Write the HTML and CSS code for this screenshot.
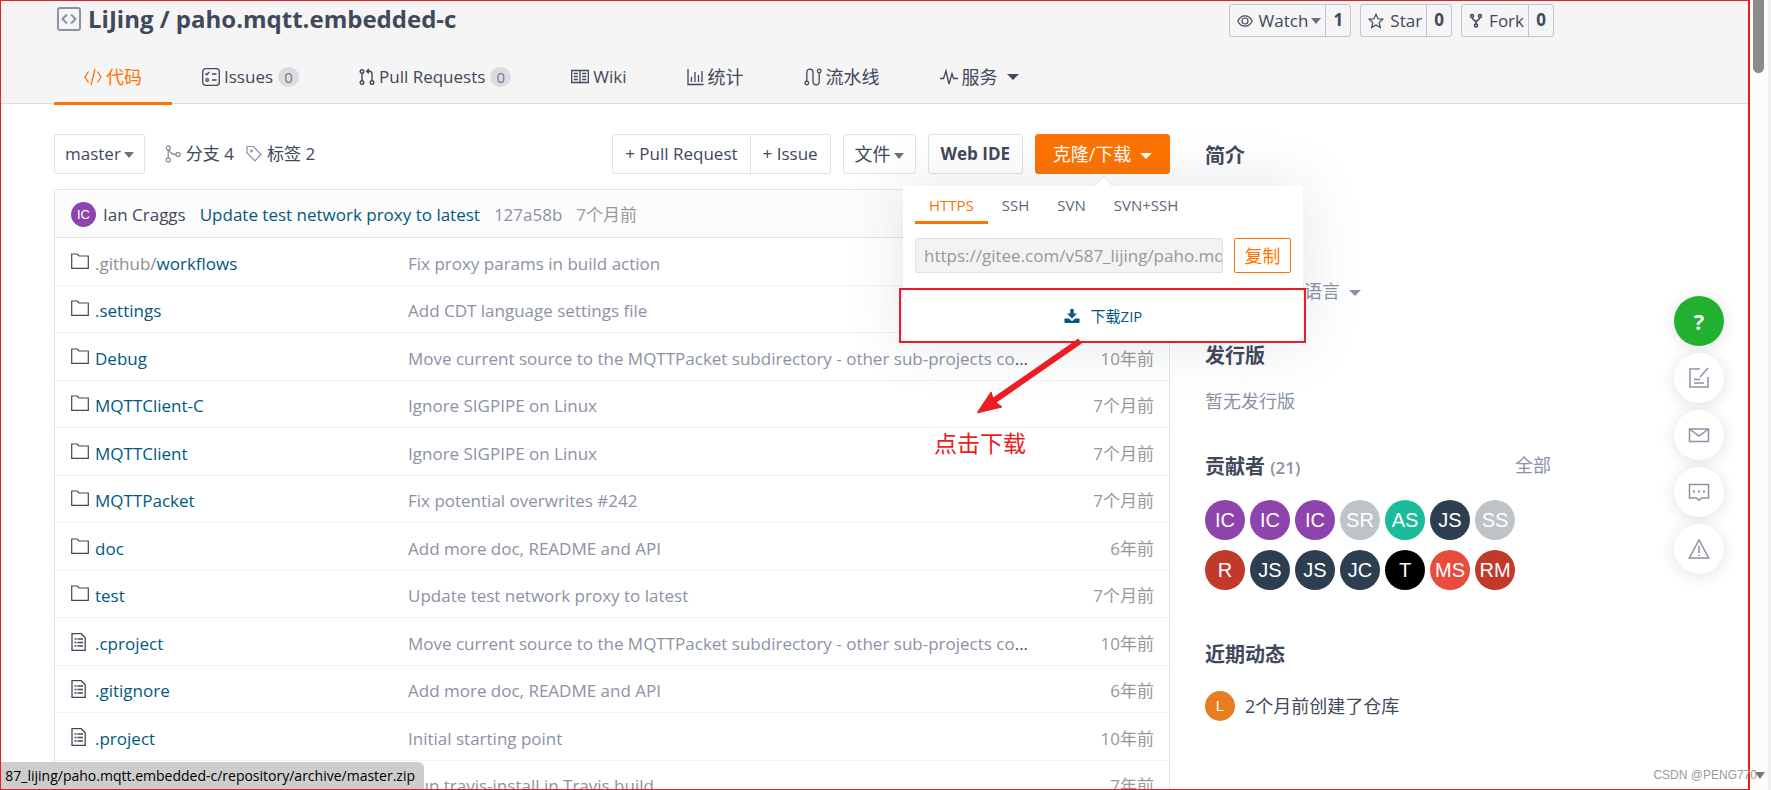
FILE: index.html
```html
<!DOCTYPE html>
<html lang="zh-CN">
<head>
<meta charset="utf-8">
<title>LiJing / paho.mqtt.embedded-c</title>
<link rel="stylesheet" href="styles.css">
</head>
<body>
<svg class="defs" aria-hidden="true">
  <symbol id="folder" viewBox="0 0 18 18"><path d="M.7 15.300V1h5.500l1.800 2h9.300v12.300z" fill="none" stroke="currentColor" stroke-width="1.200"/></symbol>
  <symbol id="file" viewBox="0 0 18 18"><path d="M1 .7h9.200l4 4v12.600H1z" fill="none" stroke="currentColor" stroke-width="1.300"/><path d="M3.500 6h2M6.500 6H12M3.500 9.500h2M6.500 9.500H12M3.500 13h2M6.500 13H12" stroke="currentColor" stroke-width="1.500"/></symbol>
</svg>
<div class="app">
<div class="page">
  <header class="head">
    <div class="wrap title-row">
      <h1 class="title">
        <svg width="24" height="24" viewBox="0 0 24 24" fill="none" stroke="#8c92a4" stroke-width="2"><rect x="1" y="1" width="22" height="22" rx="2"/><path d="M10 7.500L5.500 12l4.500 4.500M14 7.500l4.500 4.500-4.500 4.500"/></svg>
        <span>LiJing / paho.mqtt.embedded-c</span>
      </h1>
      <div class="social">
        <div class="pair"><button>
          <svg width="16" height="14" viewBox="0 0 16 14" fill="none" stroke="currentColor" stroke-width="1.200"><path d="M.8 7C2.500 3.500 5 1.800 8 1.800S13.500 3.500 15.200 7C13.500 10.500 11 12.200 8 12.200S2.500 10.500.8 7z"/><circle cx="8" cy="7" r="3"/></svg>
          Watch<i class="caret"></i></button><a href="#">1</a></div>
        <div class="pair"><button>
          <svg width="16" height="16" viewBox="0 0 16 16" fill="none" stroke="currentColor" stroke-width="1.200"><path d="M8 1.300l2 4.500 4.900.5-3.700 3.300 1.100 4.900L8 12l-4.300 2.500 1.100-4.900L1.100 6.300 6 5.800z"/></svg>
          Star</button><a href="#">0</a></div>
        <div class="pair"><button>
          <svg width="14" height="16" viewBox="0 0 14 16" fill="none" stroke="currentColor" stroke-width="1.500"><circle cx="3" cy="3" r="1.500"/><circle cx="11" cy="3" r="1.500"/><circle cx="7" cy="12.500" r="1.500"/><path d="M3 4.500C3 7 7 7 7 9.500V11M11 4.500C11 7 7 7 7 9.500"/></svg>
          Fork</button><a href="#">0</a></div>
      </div>
    </div>
    <nav class="wrap tabs">
      <a class="tab cn on" href="#"><svg width="18" height="18" viewBox="0 0 18 18" fill="none" stroke="currentColor" stroke-width="1.300"><path d="M4.500 3.500L1 9l3.500 5.500M13.500 3.500L17 9l-3.500 5.500M11 1L7 17"/></svg>代码</a>
      <a class="tab" href="#"><svg width="18" height="18" viewBox="0 0 18 18" fill="none" stroke="currentColor" stroke-width="1.300"><rect x=".7" y=".7" width="16.600" height="16.600" rx="3"/><path d="M3.500 5.500l1.300 1.300L7.300 4M10 6h4.500M10 12h4.500"/><circle cx="5.200" cy="12" r="1.300"/></svg>Issues<b class="count">0</b></a>
      <a class="tab" href="#"><svg width="16" height="18" viewBox="0 0 16 18" fill="none" stroke="currentColor" stroke-width="1.400"><circle cx="3" cy="3.500" r="1.800"/><circle cx="3" cy="14.500" r="1.800"/><circle cx="13" cy="14.500" r="1.800"/><path d="M3 5.300v7.400M13 12.700V6c0-2-1-2.800-2.500-2.800H8M10 1L7.700 3.200 10 5.400"/></svg>Pull Requests<b class="count">0</b></a>
      <a class="tab" href="#"><svg width="18" height="18" viewBox="0 0 18 18" fill="none" stroke="currentColor" stroke-width="1.300"><path d="M.7 2.500h16.600v12H.7zM9 2.500v13M2.800 5.500h4M2.800 8.500h4M2.800 11.500h4M11.200 5.500h4M11.200 8.500h4M11.200 11.500h4"/></svg>Wiki</a>
      <a class="tab cn" href="#"><svg width="17" height="18" viewBox="0 0 17 18" fill="none" stroke="currentColor" stroke-width="1.300"><path d="M1 1v15.500h15.500M4.500 14V9M8 14V4M11.500 14V7M15 14V3"/></svg>统计</a>
      <a class="tab cn" href="#"><svg width="18" height="18" viewBox="0 0 18 18" fill="none" stroke="currentColor" stroke-width="1.300"><circle cx="2.800" cy="15" r="1.800"/><circle cx="15.200" cy="3" r="1.800"/><path d="M2.800 13.200V4.500c0-4.600 6.200-4.600 6.200 0v9c0 4.600 6.200 4.600 6.200 0V4.800"/></svg>流水线</a>
      <a class="tab cn" href="#"><svg width="18" height="18" viewBox="0 0 18 18" fill="none" stroke="currentColor" stroke-width="1.300"><path d="M0 10.500h3.500L6 3l3 13 3-10.500 1.500 5H18"/></svg>服务<i class="caret big"></i></a>
    </nav>
  </header>

  <div class="wrap body">
    <main>
      <div class="bar">
        <button class="btn branch">master<i class="caret"></i></button>
        <a class="meta" href="#"><svg width="16" height="18" viewBox="0 0 16 18" fill="none" stroke="#8c92a4" stroke-width="1.300"><circle cx="3.200" cy="3" r="2"/><circle cx="3.200" cy="15" r="2"/><circle cx="13" cy="9.500" r="2"/><path d="M3.200 5v8M4 5c1 3 4 4.500 7 4.500"/></svg>分支 4</a>
        <a class="meta" href="#"><svg width="16" height="18" viewBox="0 0 16 18" fill="none" stroke="#8c92a4" stroke-width="1.200"><path d="M1 1.500h6.500l7.500 8-6 6.500-8-8z"/><circle cx="5.500" cy="6" r=".8"/></svg>标签 2</a>
        <div class="actions">
          <div class="group"><button class="btn">+ Pull Request</button><button class="btn">+ Issue</button></div>
          <button class="btn files cn">文件<i class="caret"></i></button>
          <button class="btn ide">Web IDE</button>
          <div class="clone">
            <button class="btn primary cn">克隆/下载<i class="caret big"></i></button>
            <div class="pop">
              <div class="proto"><button class="on">HTTPS</button><button>SSH</button><button>SVN</button><button>SVN+SSH</button></div>
              <div class="copy"><input type="text" aria-label="HTTPS" readonly value="https://gitee.com/v587_lijing/paho.mqtt.embedded-c.git"><button class="cn">复制</button></div>
              <a class="zip" href="#"><svg width="16" height="16" viewBox="0 0 16 16" fill="currentColor"><path d="M6.300 1h3.400v4.500h3.200L8 10.500 3.100 5.500h3.200z"/><path d="M.5 10.500h4.300L8 13.300l3.200-2.800h4.300V15H.5z"/></svg>下载ZIP</a>
              <div class="mark"></div>
              <svg class="arrow" width="110" height="80" viewBox="0 0 110 80"><path d="M103 3L15 64" stroke="#ec1c24" stroke-width="6"/><path d="M0 75l14-21 3 9 8 6z" fill="#ec1c24" stroke="#ec1c24" stroke-width="1"/></svg>
              <div class="note">点击下载</div>
            </div>
          </div>
        </div>
      </div>

      <div class="tree">
        <div class="commit"><span class="av">IC</span><a class="who" href="#">Ian Craggs</a><a class="msg" href="#">Update test network proxy to latest</a><span class="sha">127a58b</span><span class="ago">7个月前</span></div>
        <table>
          <tbody>
          <tr><td class="name"><a href="#"><svg><use href="#folder"/></svg><span class="dim">.github/</span>workflows</a></td><td class="log"><div>Fix proxy params in build action</div></td><td class="time">7个月前</td></tr>
          <tr><td class="name"><a href="#"><svg><use href="#folder"/></svg>.settings</a></td><td class="log"><div>Add CDT language settings file</div></td><td class="time">10年前</td></tr>
          <tr><td class="name"><a href="#"><svg><use href="#folder"/></svg>Debug</a></td><td class="log"><div>Move current source to the MQTTPacket subdirectory - other sub-projects co<b>...</b></div></td><td class="time">10年前</td></tr>
          <tr><td class="name"><a href="#"><svg><use href="#folder"/></svg>MQTTClient-C</a></td><td class="log"><div>Ignore SIGPIPE on Linux</div></td><td class="time">7个月前</td></tr>
          <tr><td class="name"><a href="#"><svg><use href="#folder"/></svg>MQTTClient</a></td><td class="log"><div>Ignore SIGPIPE on Linux</div></td><td class="time">7个月前</td></tr>
          <tr><td class="name"><a href="#"><svg><use href="#folder"/></svg>MQTTPacket</a></td><td class="log"><div>Fix potential overwrites #242</div></td><td class="time">7个月前</td></tr>
          <tr><td class="name"><a href="#"><svg><use href="#folder"/></svg>doc</a></td><td class="log"><div>Add more doc, README and API</div></td><td class="time">6年前</td></tr>
          <tr><td class="name"><a href="#"><svg><use href="#folder"/></svg>test</a></td><td class="log"><div>Update test network proxy to latest</div></td><td class="time">7个月前</td></tr>
          <tr><td class="name"><a href="#"><svg><use href="#file"/></svg>.cproject</a></td><td class="log"><div>Move current source to the MQTTPacket subdirectory - other sub-projects co<b>...</b></div></td><td class="time">10年前</td></tr>
          <tr><td class="name"><a href="#"><svg><use href="#file"/></svg>.gitignore</a></td><td class="log"><div>Add more doc, README and API</div></td><td class="time">6年前</td></tr>
          <tr><td class="name"><a href="#"><svg><use href="#file"/></svg>.project</a></td><td class="log"><div>Initial starting point</div></td><td class="time">10年前</td></tr>
          <tr><td class="name"></td><td class="log"><div>Run travis-install in Travis build</div></td><td class="time">7年前</td></tr>
          </tbody>
        </table>
      </div>
    </main>

    <aside>
      <section class="intro"><h2>简介</h2><p class="lang">种语言<i class="caret big"></i></p></section>
      <section class="release"><h2>发行版</h2><p>暂无发行版</p></section>
      <section class="people">
        <div class="row"><h2>贡献者 <span>(21)</span></h2><a href="#">全部</a></div>
        <div class="faces">
          <span class="purple">IC</span><span class="purple">IC</span><span class="purple">IC</span><span class="grey">SR</span><span class="teal">AS</span><span class="navy">JS</span><span class="grey">SS</span>
          <span class="brick">R</span><span class="navy">JS</span><span class="navy">JS</span><span class="navy">JC</span><span class="black">T</span><span class="coral">MS</span><span class="brick">RM</span>
        </div>
      </section>
      <section><h2>近期动态</h2><div class="event"><span class="av2">L</span>2个月前创建了仓库</div></section>
    </aside>
  </div>

  <div class="float">
    <button class="help" aria-label="帮助">?</button>
    <button aria-label="反馈"><svg width="22" height="22" viewBox="0 0 22 22"><path d="M12 2H2v18h18V10M20 1l-8 9M6 12.500h6M6 16h10"/></svg></button>
    <button aria-label="邮件"><svg width="22" height="22" viewBox="0 0 22 22"><path d="M1.500 5h19v12.500h-19zM1.500 5l9.500 7 9.500-7"/></svg></button>
    <button aria-label="评论"><svg width="22" height="22" viewBox="0 0 22 22"><path d="M1.500 3.500h19V17h-7L11 19.500 8.500 17h-7z"/><path d="M5 10.500h2M10 10.500h2M15 10.500h2" stroke-width="2"/></svg></button>
    <button aria-label="举报"><svg width="22" height="22" viewBox="0 0 22 22"><path d="M11 2l9.700 18H1.300zM11 8v7M11 16.500v1.500"/></svg></button>
  </div>
  <div class="status">87_lijing/paho.mqtt.embedded-c/repository/archive/master.zip</div>
  <div class="frame"></div>
</div>
<div class="scroll"><i class="thumb"></i><i class="down"></i></div>
<div class="credit">CSDN @PENG770</div>
</div>
</body>
</html>
```
FILE: styles.css
```css
* { box-sizing: border-box; }
body, h1, h2, p { margin: 0; }
body {
  height: 100vh;
  overflow: hidden;
  background: #fff;
  color: #40485b;
  font: 17px/24px "Open Sans", "Noto Sans CJK SC", sans-serif;
}
button, input { font: inherit; color: inherit; }
button { cursor: pointer; }
a { color: inherit; text-decoration: none; }
svg { flex: none; }
.cn { font-size: 18px; }
.defs { display: none; }
.app { display: grid; grid-template-columns: 1fr 21px; height: 100vh; position: relative; }
.page { position: relative; overflow: hidden; min-width: 0; }
.wrap { max-width: 1608px; padding: 0 54px; }

.head { background: #f5f5f5; border-bottom: 1px solid #dcdddf; height: 104px; }
.title-row { display: flex; justify-content: space-between; align-items: flex-start; height: 51px; padding-top: 4px; }
.title { display: flex; align-items: center; gap: 7px; padding-left: 3px; font-size: 24px; line-height: 30px; font-weight: 700; }
.social { display: flex; gap: 9px; }
.pair { display: flex; height: 33px; border: 1px solid #c0c4d0; border-radius: 3px; }
.pair button { display: flex; align-items: center; gap: 6px; padding: 0 4px 0 7px; border: 0; background: none; }
.pair .caret { margin-left: -3px; }
.pair a { width: 25px; border-left: 1px solid #c0c4d0; text-align: center; font-weight: 700; line-height: 30px; }
.caret { display: inline-block; border: 5px solid transparent; border-top: 6px solid #6b7080; border-bottom: 0; margin-left: 3px; vertical-align: middle; }
.caret.big { border-width: 6px 6px 0; border-top-color: currentColor; margin-left: 9px; }

.tabs { display: flex; height: 54px; }
.tab { display: flex; align-items: center; gap: 4px; padding: 0 30px; border-bottom: 3px solid transparent; }
.tab.on { color: #fe7300; border-color: #fe7300; }
.tab .caret.big { margin-left: 5px; }
.count { min-width: 21px; height: 20px; margin-left: 1px; border-radius: 10px; background: #dcdcde; color: #6a7a9f; font-size: 15px; font-weight: 400; line-height: 20px; text-align: center; }

.body { display: grid; grid-template-columns: minmax(0, 1fr) 350px; gap: 34px; padding-top: 30px; }
.bar { display: flex; align-items: center; height: 40px; margin-bottom: 15px; }
.btn { height: 40px; padding: 0 12px; border: 1px solid #dce3e8; border-radius: 3px; background: #fff; white-space: nowrap; }
.branch { padding: 0 10px; margin-right: 20px; }
.meta { display: flex; align-items: center; gap: 5px; margin-right: 12px; }
.actions { display: flex; gap: 12px; margin-left: auto; }
.group { display: flex; }
.group .btn:first-child { border-radius: 3px 0 0 3px; }
.group .btn:last-child { border-left: 0; border-radius: 0 3px 3px 0; }
.files { padding: 0 11px; }
.ide { font-weight: 700; }
.clone { position: relative; }
.primary { width: 135px; padding: 0; background: #fe7300; border-color: #fe7300; color: #fff; }

.pop { position: absolute; z-index: 2; top: 52px; left: -132px; width: 400px; height: 156px; padding: 0 12px; background: #fff; box-shadow: 0 0 60px rgba(60, 70, 100, .14); }
.pop::before { content: ""; position: absolute; top: -7px; left: 193px; width: 14px; height: 14px; background: #fff; border: 1px solid #e0e2e6; border-right: 0; border-bottom: 0; transform: rotate(45deg); clip-path: polygon(0 0, 100% 0, 0 100%); }
.proto { display: flex; height: 38px; font-size: 15px; color: #60677a; }
.proto button { padding: 3px 14px 0; border: 0; border-bottom: 3px solid transparent; background: none; }
.proto .on { color: #fe7300; border-color: #fe7300; }
.copy { display: flex; gap: 11px; padding: 14px 0 17px; border-bottom: 1px solid #eceef1; }
.copy input { flex: 1; min-width: 0; height: 35px; padding: 0 0 0 8px; border: 1px solid #dce3e8; border-radius: 2px; background: #f3f3f4; color: #989898; }
.copy button { width: 57px; height: 35px; padding: 0; border: 1px solid #fe7300; border-radius: 2px; background: #fff; color: #fe7300; }
.zip { display: flex; height: 50px; align-items: center; justify-content: center; gap: 11px; color: #005980; font-size: 15px; }
.mark { position: absolute; left: -4px; top: 102px; width: 407px; height: 55px; border: 2px solid #ec1c24; }
.arrow { position: absolute; left: 74px; top: 152px; }
.note { position: absolute; left: 31px; top: 242px; color: #ec1c24; font-size: 23px; line-height: 30px; white-space: nowrap; }

.tree { border: 1px solid #e3e5e8; border-radius: 3px 3px 0 0; }
.commit { display: flex; align-items: center; height: 48px; padding: 2px 16px 0; background: #fcfcfc; border-bottom: 1px solid #e1e3e6; }
.av { width: 25px; height: 25px; margin-right: 7px; border-radius: 50%; background: #8e44ad; color: #fff; font: 13px/25px "Liberation Sans", sans-serif; text-align: center; }
.msg { margin: 0 14px; color: #005980; }
.sha { color: #8c92a4; margin-right: 14px; }
.ago, .time { color: #989898; }
table { width: 100%; border-collapse: separate; border-spacing: 0; table-layout: fixed; }
tr { height: 48px; }
tr:nth-child(even) { height: 47px; }
td { padding: 4px 0 0; border-bottom: 1px solid #eff2f5; }
.name { width: 353px; padding-left: 16px; color: #005980; }
.name a { display: flex; align-items: center; }
.name svg { width: 18px; height: 18px; margin: 0 6px 4px 0; color: #40485b; }
.dim { color: #8c8c94; }
.log { color: #8c92a4; white-space: nowrap; }
.log b { color: #40485b; font-weight: 400; }
.time { width: 100px; padding-right: 15px; text-align: right; }

h2 { font-size: 20px; line-height: 28px; font-weight: 700; }
aside { padding: 8px 3px 0 1px; font-size: 18px; }
aside p { color: #8c92a4; }
.intro { height: 200px; }
.lang { padding: 109px 0 0 81px; }
.release { height: 111px; }
.release p { padding-top: 19px; }
.people { height: 188px; }
.row { display: flex; justify-content: space-between; }
.row h2 span { color: #8c92a4; font-size: 17px; font-weight: 600; }
.row a { color: #8c92a4; }
.faces { display: grid; grid-template-columns: repeat(7, 40px); gap: 10px 5px; padding-top: 18px; }
.faces span { height: 40px; border-radius: 50%; color: #fff; font: 20px/40px "Liberation Sans", sans-serif; text-align: center; }
.purple { background: #8e44ad; }
.grey { background: #bdc3c7; }
.teal { background: #1abc9c; }
.navy { background: #2c3e50; }
.brick { background: #c0392b; }
.black { background: #000; }
.coral { background: #e74c3c; }
.event { display: flex; align-items: center; gap: 10px; padding-top: 22px; }
.av2 { width: 30px; height: 30px; border-radius: 50%; background: #e67e22; color: #fff; font: 15px/30px "Liberation Sans", sans-serif; text-align: center; }

.float { position: absolute; top: 296px; right: 26px; display: grid; gap: 7px; }
.float button { display: grid; place-items: center; width: 50px; height: 50px; padding: 0; border: 0; border-radius: 50%; background: #fff; box-shadow: 0 2px 16px rgba(0, 0, 0, .12); }
.float svg { fill: none; stroke: #8c92a4; stroke-width: 1.5; }
.float .help { background: #21b02f; color: #fff; font-size: 22px; font-weight: 700; }
.status { position: absolute; left: 0; bottom: 0; display: flex; justify-content: flex-end; width: 424px; height: 28px; padding-right: 9px; overflow: hidden; border-radius: 0 6px 0 0; background: #cdcdcd; color: #000; font-size: 14px; line-height: 28px; white-space: nowrap; }
.frame { position: absolute; inset: 0; border: 1px solid #ec1c24; border-right-width: 2px; pointer-events: none; }
.scroll { position: relative; background: #fcfcfc; border-right: 3px solid #f0f0f0; }
.thumb { display: block; width: 11px; height: 73px; margin-left: 3px; border-radius: 0 0 6px 6px; background: #8b8b8b; }
.down { position: absolute; bottom: 11px; left: 5px; border: 5px solid transparent; border-top: 7px solid #777; border-bottom: 0; }
.credit { position: absolute; right: 14px; bottom: 5px; color: #999; font: 12px/20px "Liberation Sans", sans-serif; }
```
